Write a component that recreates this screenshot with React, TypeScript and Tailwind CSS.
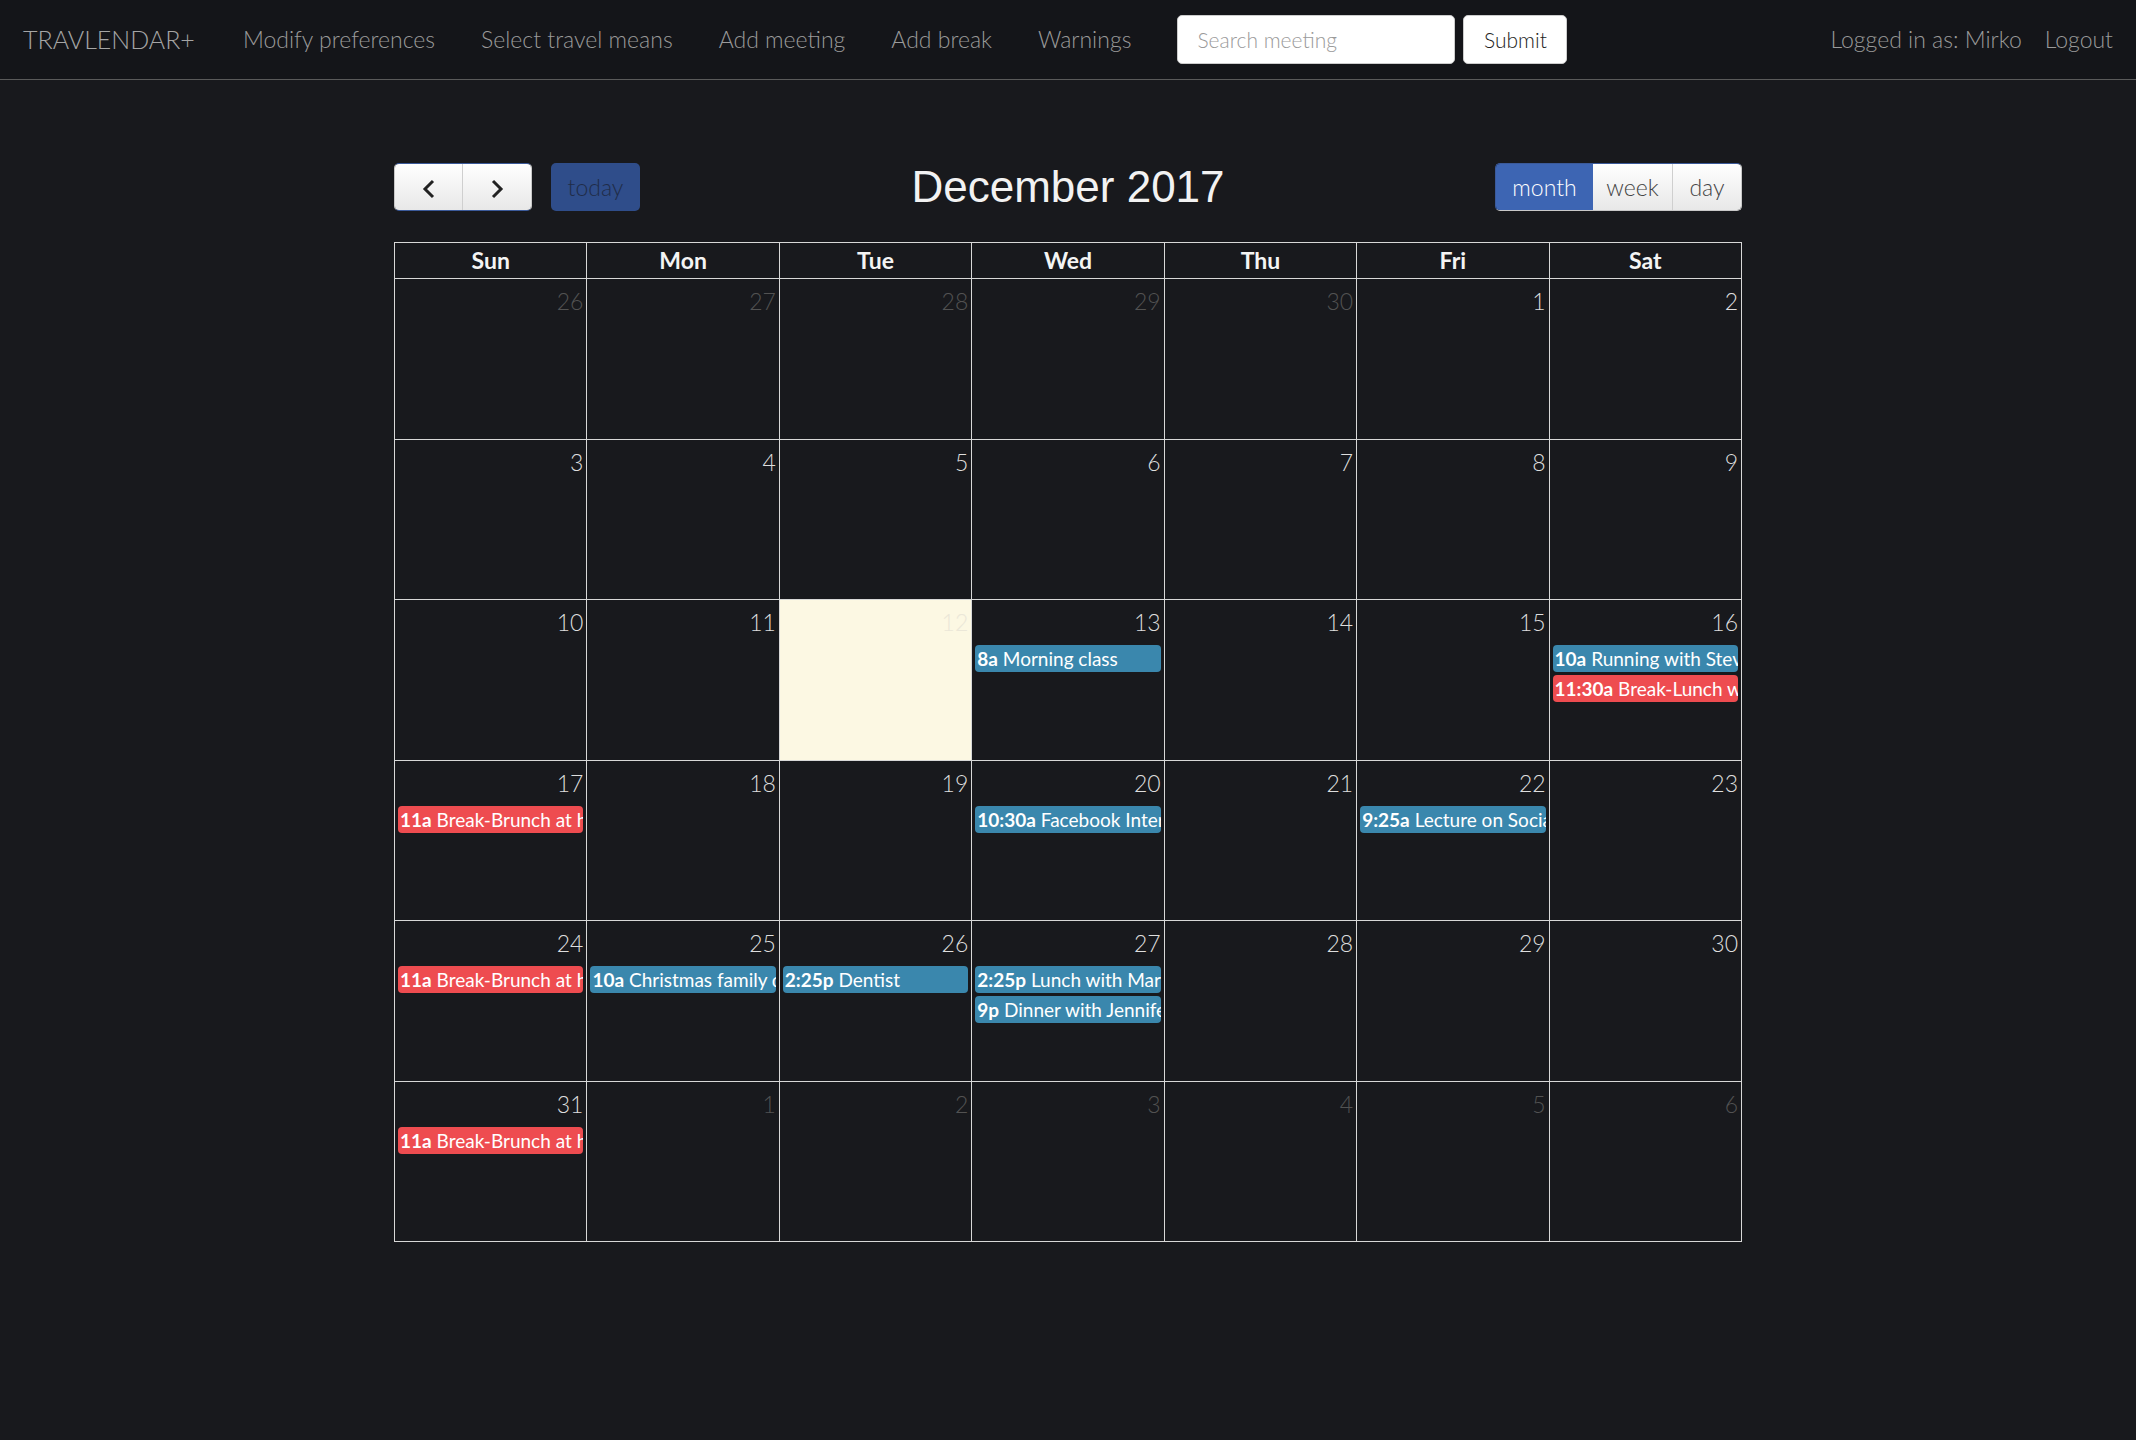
import React from "react";

type Ev = {time: string; title: string; color: "blue" | "red"};

const weeks: number[][] = [
  [26, 27, 28, 29, 30, 1, 2],
  [3, 4, 5, 6, 7, 8, 9],
  [10, 11, 12, 13, 14, 15, 16],
  [17, 18, 19, 20, 21, 22, 23],
  [24, 25, 26, 27, 28, 29, 30],
  [31, 1, 2, 3, 4, 5, 6],
];

const events: Record<string, Ev[]> = {
  "2-3": [{time: "8a", title: "Morning class", color: "blue"}],
  "2-6": [
    {time: "10a", title: "Running with Steve", color: "blue"},
    {time: "11:30a", title: "Break-Lunch with Anna", color: "red"},
  ],
  "3-0": [{time: "11a", title: "Break-Brunch at home", color: "red"}],
  "3-3": [{time: "10:30a", title: "Facebook Interview", color: "blue"}],
  "3-5": [{time: "9:25a", title: "Lecture on Social Networks", color: "blue"}],
  "4-0": [{time: "11a", title: "Break-Brunch at home", color: "red"}],
  "4-1": [{time: "10a", title: "Christmas family dinner", color: "blue"}],
  "4-2": [{time: "2:25p", title: "Dentist", color: "blue"}],
  "4-3": [
    {time: "2:25p", title: "Lunch with Mark", color: "blue"},
    {time: "9p", title: "Dinner with Jennifer", color: "blue"},
  ],
  "5-0": [{time: "11a", title: "Break-Brunch at home", color: "red"}],
};

const days = ["Sun", "Mon", "Tue", "Wed", "Thu", "Fri", "Sat"];
const navLinks = ["Modify preferences", "Select travel means", "Add meeting", "Add break", "Warnings"];

function Navbar() {
  return (
    <nav className="h-[80px] bg-[#141519] border-b border-[#5a5a5a] flex items-center px-[23px] font-['Lato',sans-serif] font-light text-[23px] text-[#9a9a9a]">
      <span className="text-[25px] text-[#a5a5a5]">TRAVLENDAR+</span>
      <ul className="flex items-center gap-[46px] ml-[48px]">
        {navLinks.map(l => (
          <li key={l}>{l}</li>
        ))}
      </ul>
      <div className="flex items-center gap-[8px] ml-[46px]">
        <input
          placeholder="Search meeting"
          className="w-[278px] h-[49px] rounded-[5px] bg-white border border-[#ccc] px-[19px] text-[21px] text-[#333] placeholder:text-[#9a9a9a] outline-none"
        />
        <button className="w-[104px] h-[49px] rounded-[5px] bg-white border border-[#ccc] text-[21px] text-[#222] font-light">Submit</button>
      </div>
      <div className="ml-auto flex items-center gap-[23px]">
        <span>Logged in as: Mirko</span>
        <span>Logout</span>
      </div>
    </nav>
  );
}

function Chevron({dir}: {dir: "left" | "right"}) {
  return (
    <svg width="14" height="22" viewBox="0 0 14 22" fill="none" className="mt-[3px]">
      <polyline
        points={dir === "left" ? "11,3 3,11 11,19" : "3,3 11,11 3,19"}
        stroke="#222"
        strokeWidth="3"
      />
    </svg>
  );
}

function Toolbar() {
  return (
    <div className="flex items-center h-[48px] mb-[31px]">
      <div className="flex-1 flex items-center">
        <div className="flex h-[48px] rounded-[5px] border border-[#c8c8c8] border-t-[#3b5a9a] border-b-[#3b5a9a] overflow-hidden">
          <button className="w-[68px] h-full flex items-center justify-center bg-gradient-to-b from-white to-[#e8e8e8] border-r border-[#cfcfcf]">
            <Chevron dir="left" />
          </button>
          <button className="w-[68px] h-full flex items-center justify-center bg-gradient-to-b from-white to-[#e8e8e8]">
            <Chevron dir="right" />
          </button>
        </div>
        <button className="ml-[19px] w-[89px] h-[48px] rounded-[5px] bg-[#2f4d8a] text-[#1f2c48] text-[23px] font-['Lato',sans-serif] font-light">
          today
        </button>
      </div>
      <h2 className="text-[44px] leading-none text-[#f2f2f2] font-['Liberation_Sans',Arial,sans-serif]">December 2017</h2>
      <div className="flex-1 flex justify-end">
        <div className="flex h-[48px] rounded-[5px] overflow-hidden border border-[#c8c8c8] border-l-[#3b5a9a] border-t-[#3b5a9a] font-['Lato',sans-serif] font-light text-[23px]">
          <button className="w-[97px] h-full bg-[#3d65b3] text-white">month</button>
          <button className="w-[80px] h-full bg-gradient-to-b from-white to-[#e8e8e8] text-[#444] border-r border-[#cfcfcf]">week</button>
          <button className="w-[68px] h-full bg-gradient-to-b from-white to-[#e8e8e8] text-[#444]">day</button>
        </div>
      </div>
    </div>
  );
}

function EventChip({ev}: {ev: Ev}) {
  return (
    <div
      className={
        "h-[27px] leading-[27px] rounded-[4px] px-[2px] text-[19px] text-white whitespace-nowrap overflow-hidden " +
        (ev.color === "blue" ? "bg-[#3a87ad]" : "bg-[#ee4c50]")
      }
    >
      <span className="font-bold">{ev.time}</span> {ev.title}
    </div>
  );
}

function Calendar() {
  return (
    <div className="w-[1348px] border-l border-t border-[#d8d8d8] font-['Lato',sans-serif]">
      <div className="grid grid-cols-7">
        {days.map(d => (
          <div key={d} className="h-[36px] border-r border-b border-[#d8d8d8] flex items-center justify-center text-[23px] font-bold text-[#f4f4f4]">
            {d}
          </div>
        ))}
      </div>
      {weeks.map((week, wi) => (
        <div key={wi} className="grid grid-cols-7">
          {week.map((n, di) => {
            const other = (wi === 0 && n > 20) || (wi === 5 && n < 20);
            const today = wi === 2 && n === 12;
            const evs = events[`${wi}-${di}`] || [];
            return (
              <div
                key={di}
                className={
                  "h-[160.5px] border-r border-b border-[#d8d8d8] " + (today ? "bg-[#fcf8e3]" : "")
                }
              >
                <div
                  className={
                    "text-right pr-[3px] pt-[7px] text-[23px] leading-[30px] font-light " +
                    (other ? "text-[#525252]" : today ? "text-[#ebe7d8]" : "text-[#dedede]")
                  }
                >
                  {n}
                </div>
                <div className="mt-[8px] mx-[3px] flex flex-col gap-[3px]">
                  {evs.map((ev, i) => (
                    <EventChip key={i} ev={ev} />
                  ))}
                </div>
              </div>
            );
          })}
        </div>
      ))}
    </div>
  );
}

export default function App() {
  return (
    <div className="min-h-screen bg-[#18191d]">
      <Navbar />
      <main className="w-[1348px] ml-[394px] pt-[83px]">
        <Toolbar />
        <Calendar />
      </main>
    </div>
  );
}
